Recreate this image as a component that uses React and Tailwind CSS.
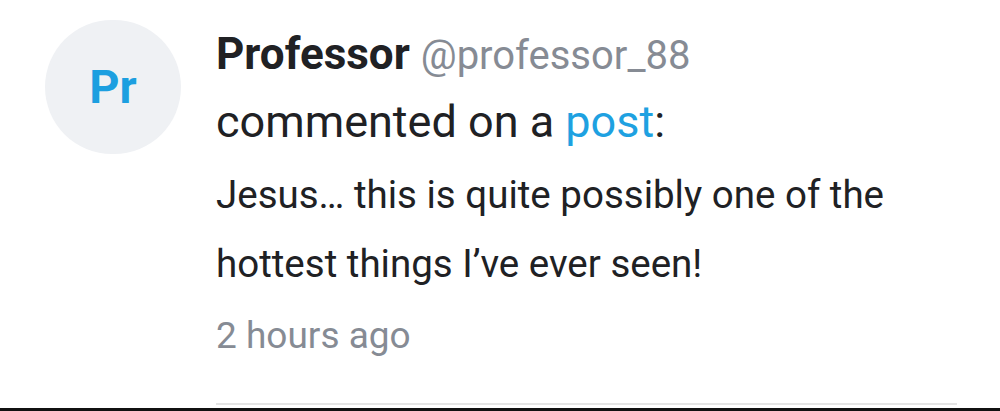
export default function App() {
  return (
    <div
      className="relative h-[411px] w-[1000px] overflow-hidden bg-white"
      style={{ fontFamily: "Roboto, 'Noto Sans', sans-serif" }}
    >
      <div className="flex pl-[45px] pt-[20px]">
        {/* avatar */}
        <div className="flex h-[134px] w-[136px] shrink-0 items-center justify-center rounded-full bg-[#eff1f4]">
          <span className="mt-[-2px] text-[47px] font-bold leading-none text-[#1c9fe0]">Pr</span>
        </div>

        {/* activity entry */}
        <div className="ml-[35px] flex w-[741px] flex-col">
          <div className="mt-[8px] text-[44px] leading-[52px] text-[#202124]">
            <span className="font-bold">Professor</span>{" "}
            <span className="text-[40px] text-[#868b94]">@professor_88</span>
          </div>
          <div className="mt-[14px] text-[45px] leading-[52px] text-[#202124]">
            commented on a <span className="text-[#1ea1e1]">post</span>:
          </div>
          <div className="mt-[12px] text-[38.5px] leading-[69px] text-[#202124]">
            Jesus… this is quite possibly one of the
            <br />
            hottest things I’ve ever seen!
          </div>
          <div className="mt-[16px] text-[37px] leading-[44px] text-[#868b94]">2 hours ago</div>
          <div className="mt-[45px] h-[2px] w-full bg-[#e4e4e4]" />
        </div>
      </div>
      <div className="absolute bottom-0 left-0 h-[3px] w-full bg-[#111]" />
    </div>
  );
}
